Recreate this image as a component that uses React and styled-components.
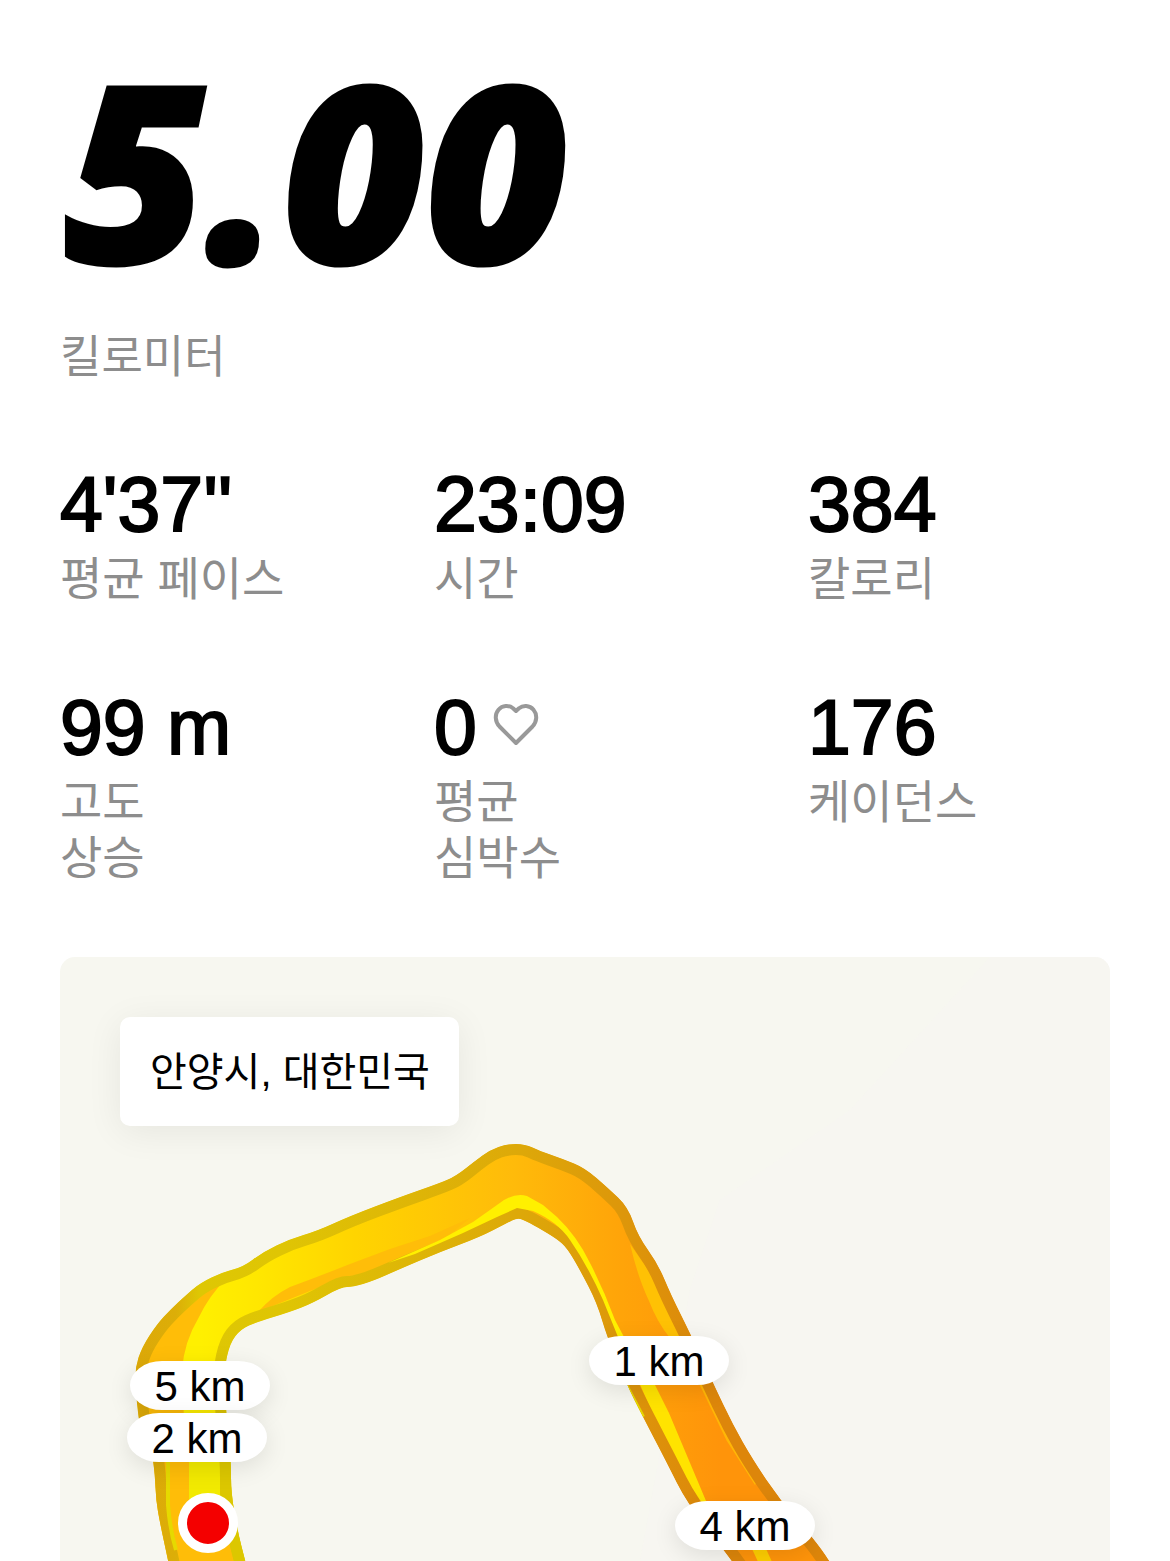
import styled, { createGlobalStyle } from 'styled-components';

const GlobalStyle = createGlobalStyle`
  * {
    box-sizing: border-box;
  }

  body {
    margin: 0;
    background: #fff;
    color: #000;
    font-family: 'Liberation Sans', 'Noto Sans CJK KR', sans-serif;
  }
`;

const Page = styled.main`
  display: flex;
  flex-direction: column;
  min-height: 100vh;
  padding: 60px 60px 0;
  overflow: hidden;
`;

const Distance = styled.h1`
  margin: 0;
  padding-left: 4px;
  font-family: 'Noto Sans', 'Open Sans', sans-serif;
  font-size: 246px;
  font-style: italic;
  font-weight: 900;
  line-height: 218px;
  -webkit-text-stroke: 3px #000;
`;

const Label = styled.div`
  color: #8d8d8d;
  font-size: 46px;
  line-height: 56px;
  white-space: pre-line;
`;

const DistanceLabel = styled(Label)`
  margin-top: 52px;
  font-size: 45px;
`;

const Stats = styled.section`
  display: grid;
  grid-template-columns: repeat(3, 1fr);
  column-gap: 72px;
  row-gap: 75px;
  margin-top: 73px;
`;

const Stat = styled.div`
  min-width: 0;
`;

const Value = styled.div`
  display: flex;
  align-items: center;
  gap: 16px;
  margin-bottom: 2px;
  font-size: 77px;
  line-height: 90px;
  -webkit-text-stroke: 2px #000;
`;

const HeartIcon = styled.svg`
  width: 46px;
  height: 44px;
  margin-bottom: 4px;
`;

const Map = styled.section`
  position: relative;
  flex: 1;
  min-height: 604px;
  margin-top: 71px;
  border-radius: 15px 15px 0 0;
  background: #f7f7f0;
  overflow: hidden;
`;

const Route = styled.svg`
  display: block;
  width: 1050px;
  height: 604px;
`;

const Place = styled.div`
  position: absolute;
  top: 60px;
  left: 60px;
  padding: 27px 29px 25px 30px;
  border-radius: 10px;
  background: #fff;
  box-shadow: 0 6px 36px rgba(0, 0, 0, 0.07);
  font-size: 40px;
  line-height: 57px;
  white-space: nowrap;
`;

const Marker = styled.div`
  position: absolute;
  top: ${(props) => props.$top}px;
  left: ${(props) => props.$left}px;
  width: 140px;
  height: 49px;
  border-radius: 32px / 50%;
  background: #fff;
  box-shadow: 0 6px 24px rgba(0, 0, 0, 0.1);
  font-size: 42px;
  line-height: 52px;
  text-align: center;
`;

const StartPoint = styled.div`
  position: absolute;
  top: 536px;
  left: 118px;
  width: 60px;
  height: 60px;
  border: 9px solid #fff;
  border-radius: 50%;
  background: #f40000;
`;

const stats = [
  { value: "4'37''", label: '평균 페이스' },
  { value: '23:09', label: '시간' },
  { value: '384', label: '칼로리' },
  { value: '99 m', label: '고도\n상승' },
  { value: '0', label: '평균\n심박수', heart: true },
  { value: '176', label: '케이던스' },
];

const markers = [
  { text: '1 km', left: 529, top: 379 },
  { text: '5 km', left: 70, top: 404 },
  { text: '2 km', left: 67, top: 456 },
  { text: '4 km', left: 615, top: 544 },
];

const roadPoints = [
  [172, 1580], [168, 1560], [160, 1523], [156, 1500], [155, 1475], [152, 1452],
  [144, 1440], [138, 1417], [136, 1390], [135, 1368], [142, 1347], [157, 1324],
  [171, 1309], [185, 1296], [200, 1283], [223, 1272], [243, 1267], [263, 1252],
  [290, 1239], [317, 1231], [350, 1216], [400, 1197], [440, 1183], [456, 1176],
  [475, 1161], [490, 1150], [507, 1144], [525, 1144], [540, 1151], [563, 1159],
  [585, 1168], [608, 1188], [628, 1207], [638, 1236], [658, 1264], [671, 1295],
  [690, 1333], [713, 1383], [733, 1425], [753, 1460], [780, 1500], [813, 1538],
  [829, 1560], [840, 1580], [745, 1580], [730, 1558], [687, 1503], [667, 1463],
  [643, 1417], [627, 1385], [607, 1337], [597, 1303], [580, 1270], [567, 1248],
  [557, 1239], [537, 1227], [524, 1220], [517, 1218], [507, 1223], [480, 1237],
  [440, 1252], [400, 1269], [373, 1281], [353, 1287], [341, 1287], [313, 1303],
  [290, 1312], [257, 1322], [241, 1329], [230, 1343], [224, 1370], [226, 1410],
  [231, 1462], [231, 1493], [238, 1533], [245, 1560], [250, 1580],
];

// rounds a closed outline by running a quadratic curve through the midpoints
const smooth = (points) => {
  const mid = (a, b) => [(a[0] + b[0]) / 2, (a[1] + b[1]) / 2];
  const start = mid(points[points.length - 1], points[0]);
  const curves = points.map((point, i) => {
    const end = mid(point, points[(i + 1) % points.length]);
    return `Q${point.join(' ')} ${end.join(' ')}`;
  });
  return `M${start.join(' ')}${curves.join('')}Z`;
};

const roadPath = smooth(roadPoints);

const Heart = () => (
  <HeartIcon viewBox="0 0 46 44" fill="none" aria-hidden="true">
    <path
      d="M23 40L6.500 23.500C2 18.500 1.500 11.500 5.500 6.700C9.500 2 16 2 20 5.200L23 8L26 5.200C30 2 36.500 2 40.500 6.700C44.500 11.500 44 18.500 39.500 23.500Z"
      stroke="#999"
      strokeWidth="4"
      strokeLinejoin="round"
    />
  </HeartIcon>
);

const RouteDrawing = () => (
  <Route viewBox="60 957 1050 604" aria-hidden="true">
    <defs>
      <linearGradient id="road" gradientUnits="userSpaceOnUse" x1="200" y1="0" x2="720" y2="0">
        <stop offset="0" stopColor="#fff000" />
        <stop offset="0.12" stopColor="#ffe600" />
        <stop offset="0.3" stopColor="#ffd400" />
        <stop offset="0.6" stopColor="#ffbb0a" />
        <stop offset="0.8" stopColor="#ffa509" />
        <stop offset="1" stopColor="#ff940a" />
      </linearGradient>
      <linearGradient id="edge" gradientUnits="userSpaceOnUse" x1="135" y1="0" x2="720" y2="0">
        <stop offset="0" stopColor="#dda809" />
        <stop offset="0.07" stopColor="#dcae08" />
        <stop offset="0.11" stopColor="#dec704" />
        <stop offset="0.25" stopColor="#dfc504" />
        <stop offset="0.65" stopColor="#dda909" />
        <stop offset="1" stopColor="#dd860b" />
      </linearGradient>
      <clipPath id="roadClip">
        <path d={roadPath} />
      </clipPath>
    </defs>

    <path d="M1110 957H990L850 1110L720 1200L690 1290L640 1561H1110Z" fill="#f6f5f1" opacity="0.6" />

    <g clipPath="url(#roadClip)" strokeLinejoin="round">
      <path d={roadPath} fill="url(#road)" />
      <path d="M189 1462H231V1500H189Z" fill="#f2ea00" />
      <path
        d="M225 1280Q209 1296 199 1317Q184 1342 182 1370L184 1420L189 1462V1510L230 1540L250 1580H160L150 1462L138 1400L145 1345L170 1315Z"
        fill="#ffbd08"
      />
      <path
        d="M258 1312Q272 1296 290 1287Q320 1276 350 1264L390 1249L430 1236L470 1218L435 1247L385 1268L345 1278L310 1291Z"
        fill="#ffbd09"
      />
      <path d="M614 1322L632 1350L655 1385L669 1413L709 1508L698 1510L660 1430L638 1380Z" fill="#ffe300" />
      <path d="M630 1244L647 1268L662 1297L685 1345L670 1338Q657 1322 649 1301Q638 1278 630 1244Z" fill="#ffc104" />
      <path d="M700 1382L728 1440L756 1484" fill="none" stroke="#ffb606" strokeWidth="3" />
      <path d="M762 1540L778 1575H764L748 1540Z" fill="#ffcf00" />
      <path d={roadPath} fill="none" stroke="url(#edge)" strokeWidth="22" />
      <path
        d="M388 1263L440 1240L473 1222L497 1205Q513 1192 527 1196L543 1205L557 1217Q577 1236 590 1263Q604 1290 615 1320L624 1337H618L603 1300Q588 1266 570 1240Q558 1222 533 1211L517 1208L497 1217L463 1233L415 1254Z"
        fill="#fff000"
      />
      <path d="M227 1440L231 1462V1493L238 1533L250 1580" fill="none" stroke="#dcc700" strokeWidth="22" />
      <path d="M168 1462V1505Q170 1530 176 1550" fill="none" stroke="#e6d900" strokeWidth="4" />
      <path d="M626 1385L643 1417" fill="none" stroke="#e6d900" strokeWidth="4" />
    </g>
  </Route>
);

const App = () => {
  return (
    <>
      <GlobalStyle />
      <Page>
        <Distance>5.00</Distance>
        <DistanceLabel>킬로미터</DistanceLabel>

        <Stats>
          {stats.map((stat) => (
            <Stat key={stat.label}>
              <Value>
                {stat.value}
                {stat.heart && <Heart />}
              </Value>
              <Label>{stat.label}</Label>
            </Stat>
          ))}
        </Stats>

        <Map>
          <RouteDrawing />
          <Place>안양시, 대한민국</Place>
          {markers.map((marker) => (
            <Marker key={marker.text} $left={marker.left} $top={marker.top}>
              {marker.text}
            </Marker>
          ))}
          <StartPoint />
        </Map>
      </Page>
    </>
  );
};

export default App;
